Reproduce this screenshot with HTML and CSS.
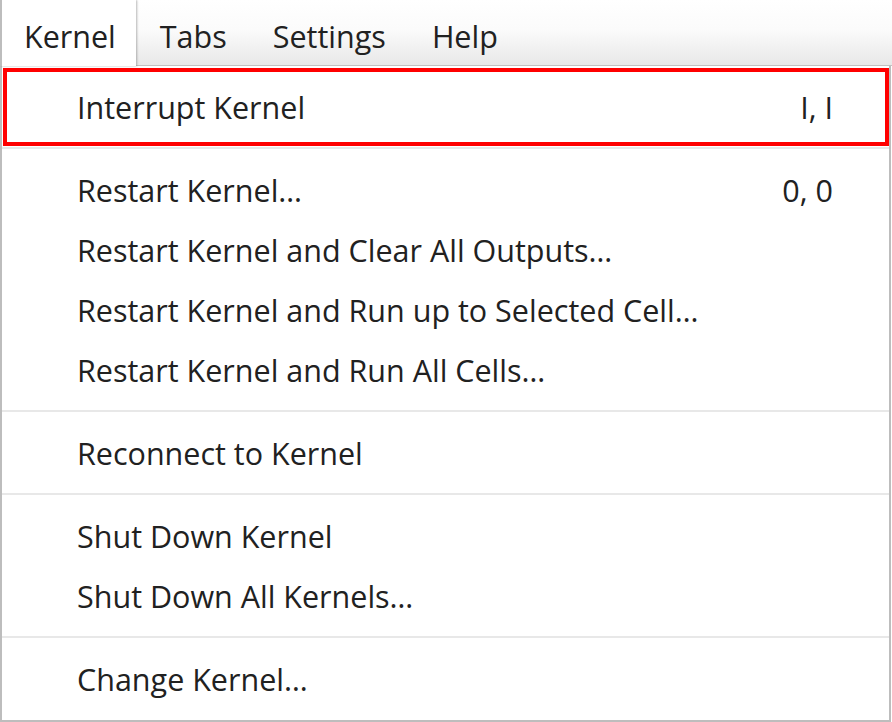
FILE: index.html
```html
<!DOCTYPE html>
<html lang="en">
<head>
<meta charset="utf-8">
<title>Kernel menu</title>
<link rel="stylesheet" href="styles.css">
</head>
<body>
<div class="app">
  <nav class="menubar">
    <div class="mb-item active">Kernel</div>
    <div class="mb-item">Tabs</div>
    <div class="mb-item">Settings</div>
    <div class="mb-item">Help</div>
  </nav>
  <div class="menu">
    <div class="item highlighted">
      <span class="label">Interrupt Kernel</span>
      <span class="shortcut">I, I</span>
      <span class="focus-ring"></span>
    </div>
    <div class="sep"></div>
    <div class="item"><span class="label">Restart Kernel…</span><span class="shortcut">0, 0</span></div>
    <div class="item"><span class="label">Restart Kernel and Clear All Outputs…</span></div>
    <div class="item"><span class="label">Restart Kernel and Run up to Selected Cell…</span></div>
    <div class="item"><span class="label">Restart Kernel and Run All Cells…</span></div>
    <div class="sep"></div>
    <div class="item"><span class="label">Reconnect to Kernel</span></div>
    <div class="sep"></div>
    <div class="item"><span class="label">Shut Down Kernel</span></div>
    <div class="item"><span class="label">Shut Down All Kernels…</span></div>
    <div class="sep"></div>
    <div class="item"><span class="label">Change Kernel…</span></div>
  </div>
</div>
</body>
</html>
```
FILE: styles.css
```css
html, body {
  margin: 0;
  padding: 0;
  background: #ffffff;
}
body {
  width: 892px;
  height: 722px;
  overflow: hidden;
  font-family: "Open Sans", "Noto Sans", "DejaVu Sans", sans-serif;
  font-size: 30.5px;
  color: #212121;
}
.app {
  display: flex;
  flex-direction: column;
}
.menubar {
  display: flex;
  align-items: stretch;
  height: 66px;
  box-sizing: border-box;
  border-bottom: 1px solid #c2c2c2;
  background: linear-gradient(#ffffff 0%, #fbfbfb 45%, #e8e8e8 100%);
}
.mb-item {
  display: flex;
  align-items: center;
  padding: 6px 22px 0 24px;
  white-space: nowrap;
}
.mb-item.active {
  background: #ffffff;
  border-left: 2px solid #bdbdbd;
  padding-left: 22px;
  padding-right: 20px;
  height: 66px;
  box-sizing: border-box;
  margin-bottom: -1px;
  box-shadow: 1px 0 2px rgba(0, 0, 0, 0.28);
  position: relative;
  z-index: 1;
}
.menu {
  width: 891px;
  box-sizing: border-box;
  border: 2px solid #bdbdbd;
  border-top: none;
  padding: 11px 0 11px;
  background: #ffffff;
}
.item {
  position: relative;
  display: flex;
  align-items: center;
  justify-content: space-between;
  height: 60px;
  line-height: 60px;
  padding: 0 56px 0 75px;
  white-space: nowrap;
}
.sep {
  height: 2px;
  margin: 10px 0 11px;
  background: #e8e8e8;
}
.focus-ring {
  position: absolute;
  left: 1px;
  right: 0;
  top: -9px;
  bottom: -9px;
  border: 4px solid #ff0000;
  pointer-events: none;
}
```
